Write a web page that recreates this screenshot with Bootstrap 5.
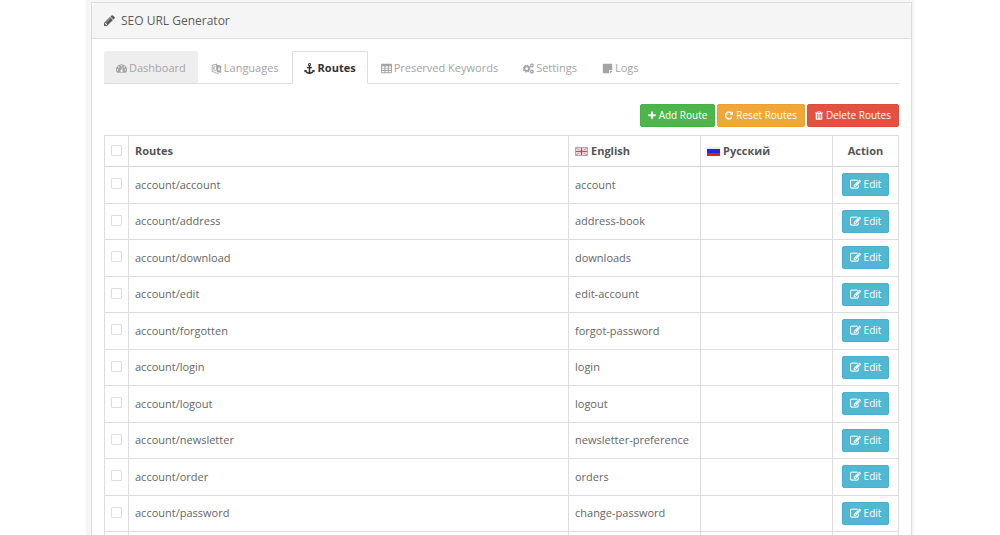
<!DOCTYPE html>
<html lang="en">
<head>
<meta charset="utf-8">
<meta name="viewport" content="width=device-width, initial-scale=1">
<title>SEO URL Generator</title>
<link href="https://cdn.jsdelivr.net/npm/bootstrap@5.3.0/dist/css/bootstrap.min.css" rel="stylesheet">
<style>
  body { font-family: "Open Sans", "Noto Sans", sans-serif; font-size: 11px; line-height: 16px; color: #666; background: #fff; }
  .page-strip { max-width: 828px; padding: 2px 2px 0 5px; background: #f6f6f6; }
  .panel { --bs-card-border-color: #dcdcdc; --bs-card-border-radius: 0; border-bottom: 0; color: #666; }
  .panel-head { padding: 8px 12px; background: #f5f5f5; border-bottom: 1px solid #dcdcdc; border-radius: 0; }
  .panel-head h1 { gap: 6px; font-size: 12px; line-height: 19px; font-weight: 400; color: #5c5c5c; }
  .panel-main { padding: 12px 12px 0; }
  .ico { width: 11px; height: 11px; fill: currentColor; flex: none; }
  .route-tabs { --bs-nav-tabs-border-color: #ddd; --bs-nav-tabs-border-radius: 2px; --bs-nav-tabs-link-active-border-color: #ddd #ddd #fff; --bs-nav-tabs-link-active-color: #333; --bs-nav-link-color: #a4a4a4; --bs-nav-link-hover-color: #888; flex-wrap: wrap; margin-bottom: 20px; }
  .route-tabs .nav-link { display: flex; align-items: center; gap: 2px; padding: 8px 11px 7px; margin-right: 1px; }
  .route-tabs .nav-link.hovered { background: #eee; border-color: #eee #eee #ddd; }
  .route-tabs .nav-link.active { gap: 3px; font-weight: 700; }
  .btn-route { --bs-btn-font-size: 10px; --bs-btn-line-height: 15px; --bs-btn-padding-x: 7px; --bs-btn-padding-y: 3px; --bs-btn-border-radius: 2px; --bs-btn-color: #fff; --bs-btn-hover-color: #fff; display: inline-flex; align-items: center; gap: 3px; }
  .toolbar .ico { width: 8px; height: 9px; }
  .btn-add { --bs-btn-bg: #4cb64c; --bs-btn-border-color: #46b046; --bs-btn-hover-bg: #409c40; }
  .btn-reset { --bs-btn-bg: #f0a638; --bs-btn-border-color: #eba032; --bs-btn-hover-bg: #dc9222; }
  .btn-delete { --bs-btn-bg: #e35141; --bs-btn-border-color: #de4b3b; --bs-btn-hover-bg: #cc3a2a; }
  .btn-edit { --bs-btn-bg: #52b7d3; --bs-btn-border-color: #49b0cd; --bs-btn-hover-bg: #3a9fbc; }
  .toolbar { gap: 2px; margin-bottom: 8px; }
  .routes { --bs-table-color: #666; --bs-table-bg: #fff; border-color: #ddd; table-layout: fixed; margin: 0; }
  .routes th, .routes td { padding: 0 6px; vertical-align: middle; }
  .routes td { padding-bottom: 1px; }
  .routes th { color: #555; font-weight: 700; }
  .routes thead tr { height: 31px; }
  .routes thead th { border-bottom: 1px solid #d2d2d2; }
  .routes tbody tr:nth-child(odd) { height: 37px; }
  .routes tbody tr:nth-child(even) { height: 36px; }
  .col-tick { width: 24px; }
  .col-lang { width: 132px; }
  .col-act { width: 66px; }
  .routes .form-check-input { width: 11px; height: 11px; margin: 0 0 2px; border: 1px solid #ddd; border-radius: 1px; display: block; }
  .flag { width: 13px; height: 9px; }
  .lang-name { gap: 3px; }
</style>
</head>
<body>
<svg class="d-none" aria-hidden="true">
  <symbol id="i-pencil" viewBox="128 128 1536 1536"><path d="M491 1536l91-91-235-235-91 91v107h128v128h107zm523-928q0-22-22-22-10 0-17 7l-542 542q-7 7-7 17 0 22 22 22 10 0 17-7l542-542q7-7 7-17zm-54-192l416 416-832 832h-416v-416zm683 96q0 53-37 90l-166 166-416-416 166-165q36-38 90-38 53 0 91 38l235 234q37 39 37 91z"/></symbol>
  <symbol id="i-dash" viewBox="0 0 14 14"><path fill-rule="evenodd" d="M7 1.500a7 7 0 0 1 5.900 10.700q-.2.300-.5.300H1.600q-.3 0-.5-.300A7 7 0 0 1 7 1.500zM2 7.500a1 1 0 1 0 0 2 1 1 0 0 0 0-2zM3.500 4a1 1 0 1 0 0 2 1 1 0 0 0 0-2zM7 2.500a1 1 0 1 0 0 2 1 1 0 0 0 0-2zM10.500 4a1 1 0 1 0 0 2 1 1 0 0 0 0-2zM12 7.500a1 1 0 1 0 0 2 1 1 0 0 0 0-2zM7.700 5.600l-.8 3a1.500 1.500 0 1 0 1 .3l.8-3z"/></symbol>
  <symbol id="i-lang" viewBox="0 0 14 14"><path fill-rule="evenodd" d="M1 2.500L7.500.500v9L1 11.500zM2 3.600v6.600l4.500-1.400V2.200z"/><path d="M2.800 4.700l2.900-.8v.8l-.8.300q-.2 1.300-.9 2.200l1.300.7-.4.700-1.500-.8-.9.700-.3-.7.600-.5-.5-.7.700-.2.300.4q.4-.5.500-1.200l-1 .3z"/><path fill-rule="evenodd" d="M7.500 2L13 3.800v9L7.500 11zM9.800 5L8.500 9.300l.8.300.3-1 1.400.5.300 1.100.8.300L10.700 5.300zm.4 1.500l.5 1.700-.9-.3z"/><path d="M3 12l1-.4q2 1.200 4.500.8v-.7l2 1.200-2 1v-.7Q5 13.600 3 12z"/></symbol>
  <symbol id="i-anchor" viewBox="0 0 14 14"><path fill-rule="evenodd" d="M7 0a2 2 0 0 1 1 3.700V5h2.200v1.800H8v4.900q2-.3 3-1.500l-.9-.9L13.500 8.500v3.600l-1-.9Q10.500 14 7 14T1.500 11.200l-1 .9V8.500l3.400.8-.9.900q1 1.200 3 1.500V6.800H3.800V5H6V3.700A2 2 0 0 1 7 0zm0 1.300a.7.700 0 1 0 0 1.400.7.700 0 0 0 0-1.400z"/></symbol>
  <symbol id="i-table" viewBox="0 0 14 14"><path fill-rule="evenodd" d="M1.200 1h11.600q1.200 0 1.200 1.200v9.600q0 1.200-1.200 1.200H1.200Q0 13 0 11.800V2.200Q0 1 1.200 1zM1.300 4v1.900h3V4zm4.300 0v1.900h3V4zm4.300 0v1.900h2.900V4zM1.300 7.100V9h3V7.100zm4.300 0V9h3V7.100zm4.300 0V9h2.900V7.100zM1.300 10.200v1.600h3v-1.600zm4.300 0v1.600h3v-1.600zm4.300 0v1.600h2.900v-1.600z"/></symbol>
  <symbol id="i-cogs" viewBox="0 0 14 14"><g fill="none" stroke="currentColor"><circle cx="4.700" cy="7.200" r="2.900" stroke-width="2.200"/><circle cx="4.700" cy="7.200" r="4.200" stroke-width="1.500" stroke-dasharray="1.800 1.500"/><circle cx="11.300" cy="3.200" r="1.600" stroke-width="1.500"/><circle cx="11.300" cy="3.200" r="2.400" stroke-width=".9" stroke-dasharray="1.200"/><circle cx="11.300" cy="11" r="1.600" stroke-width="1.500"/><circle cx="11.300" cy="11" r="2.400" stroke-width=".9" stroke-dasharray="1.200"/></g></symbol>
  <symbol id="i-note" viewBox="0 0 14 14"><path d="M1.500 1h11q.5 0 .5.500V9H9.700Q9 9 9 9.700V13H1.500q-.5 0-.5-.5v-11Q1 1 1.500 1zM10 10h3q0 .8-.5 1.300l-1.200 1.200Q10.800 13 10 13z"/></symbol>
  <symbol id="i-plus" viewBox="128 128 1536 1536"><path d="M1600 736v192q0 40-28 68t-68 28h-416v416q0 40-28 68t-68 28h-192q-40 0-68-28t-28-68v-416h-416q-40 0-68-28t-28-68v-192q0-40 28-68t68-28h416v-416q0-40 28-68t68-28h192q40 0 68 28t28 68v416h416q40 0 68 28t28 68z"/></symbol>
  <symbol id="i-repeat" viewBox="128 128 1536 1536"><path stroke="currentColor" stroke-width="60" d="M1664 256v448q0 26-19 45t-45 19h-448q-42 0-59-40-17-39 14-69l138-138q-148-137-349-137-104 0-198.500 40.500t-163.500 109.500-109.500 163.500-40.500 198.500 40.500 198.500 109.500 163.500 163.500 109.500 198.500 40.500q119 0 225-52t179-147q7-10 23-12 15 0 25 9l137 138q9 8 9.500 20.500t-7.500 22.500q-109 132-264 204.500t-327 72.500q-156 0-298-61t-245-164-164-245-61-298 61-298 164-245 245-164 298-61q147 0 284.500 55.500t244.500 156.500l130-129q29-31 70-14 39 17 39 59z"/></symbol>
  <symbol id="i-trash" viewBox="192 128 1408 1536"><path d="M704 1376v-704q0-14-9-23t-23-9h-64q-14 0-23 9t-9 23v704q0 14 9 23t23 9h64q14 0 23-9t9-23zm256 0v-704q0-14-9-23t-23-9h-64q-14 0-23 9t-9 23v704q0 14 9 23t23 9h64q14 0 23-9t9-23zm256 0v-704q0-14-9-23t-23-9h-64q-14 0-23 9t-9 23v704q0 14 9 23t23 9h64q14 0 23-9t9-23zm-544-992h448l-48-117q-7-9-17-11h-317q-10 2-17 11zm928 32v64q0 14-9 23t-23 9h-96v948q0 83-47 143.500t-113 60.500h-832q-66 0-113-58.500t-47-141.500v-952h-96q-14 0-23-9t-9-23v-64q0-14 9-23t23-9h309l70-167q15-37 54-63t79-26h320q40 0 79 26t54 63l70 167h309q14 0 23 9t9 23z"/></symbol>
  <symbol id="i-edit" viewBox="0 64 1792 1664"><path stroke="currentColor" stroke-width="50" d="M888 1184l116-116-152-152-116 116v56h96v96h56zm440-720q-16-16-33 1l-350 350q-17 17-1 33t33-1l350-350q17-17 1-33zm80 594v190q0 119-84.500 203.500t-203.500 84.500h-832q-119 0-203.500-84.500t-84.500-203.500v-832q0-119 84.500-203.500t203.500-84.500h832q63 0 117 25 15 7 18 23 3 17-9 29l-49 49q-14 14-32 8-23-6-45-6h-832q-66 0-113 47t-47 113v832q0 66 47 113t113 47h832q66 0 113-47t47-113v-126q0-13 9-22l64-64q15-15 35-7t20 29zm-96-738l288 288-672 672h-288v-288zm444 132l-92 92-288-288 92-92q28-28 68-28t68 28l152 152q28 28 28 68t-28 68z"/></symbol>
</svg>

<div class="page-strip mx-auto">
  <main class="card panel">
    <div class="card-header panel-head">
      <h1 class="d-flex align-items-center mb-0"><svg class="ico"><use href="#i-pencil"/></svg>SEO URL Generator</h1>
    </div>
    <div class="panel-main">
      <ul class="nav nav-tabs route-tabs">
        <li class="nav-item"><a class="nav-link hovered" href="#dashboard"><svg class="ico"><use href="#i-dash"/></svg>Dashboard</a></li>
        <li class="nav-item"><a class="nav-link" href="#languages"><svg class="ico"><use href="#i-lang"/></svg>Languages</a></li>
        <li class="nav-item"><a class="nav-link active" aria-current="page" href="#routes"><svg class="ico"><use href="#i-anchor"/></svg>Routes</a></li>
        <li class="nav-item"><a class="nav-link" href="#keywords"><svg class="ico"><use href="#i-table"/></svg>Preserved Keywords</a></li>
        <li class="nav-item"><a class="nav-link" href="#settings"><svg class="ico"><use href="#i-cogs"/></svg>Settings</a></li>
        <li class="nav-item"><a class="nav-link" href="#logs"><svg class="ico"><use href="#i-note"/></svg>Logs</a></li>
      </ul>
      <div class="toolbar d-flex justify-content-end">
        <button type="button" class="btn btn-route btn-add"><svg class="ico"><use href="#i-plus"/></svg>Add Route</button>
        <button type="button" class="btn btn-route btn-reset"><svg class="ico"><use href="#i-repeat"/></svg>Reset Routes</button>
        <button type="button" class="btn btn-route btn-delete"><svg class="ico"><use href="#i-trash"/></svg>Delete Routes</button>
      </div>
      <table class="table table-bordered routes" id="routes">
        <colgroup><col class="col-tick"><col><col class="col-lang"><col class="col-lang"><col class="col-act"></colgroup>
        <thead>
          <tr>
            <th><input class="form-check-input" type="checkbox" aria-label="Select all routes"></th>
            <th scope="col">Routes</th>
            <th scope="col"><span class="lang-name d-flex align-items-center"><svg class="flag" viewBox="0 0 13 9"><path fill="#f4dfe4" stroke="#b9a0ac" d="M.5.5h12v8H.5z"/><path stroke="#8b8fb8" stroke-width=".8" d="M1 1l11 7M12 1L1 8"/><path stroke="#fff" stroke-width="3" d="M6.500 1v7M1 4.500h11"/><path stroke="#d8404a" stroke-width="1.500" d="M6.500 1v7M1 4.500h11"/></svg>English</span></th>
            <th scope="col"><span class="lang-name d-flex align-items-center"><svg class="flag" viewBox="0 0 13 9"><path fill="#e8e8ee" d="M0 0h13v3H0z"/><path fill="#2a23d0" d="M0 2h13v4H0z"/><path fill="#e01d2c" d="M0 6h13v3H0z"/></svg>Русский</span></th>
            <th scope="col" class="text-center">Action</th>
          </tr>
        </thead>
        <tbody id="route-rows"></tbody>
      </table>
    </div>
  </main>
</div>
<script src="https://cdn.jsdelivr.net/npm/bootstrap@5.3.0/dist/js/bootstrap.bundle.min.js"></script>
<script>
  const routes = [
    ["account/account", "account"],
    ["account/address", "address-book"],
    ["account/download", "downloads"],
    ["account/edit", "edit-account"],
    ["account/forgotten", "forgot-password"],
    ["account/login", "login"],
    ["account/logout", "logout"],
    ["account/newsletter", "newsletter-preference"],
    ["account/order", "orders"],
    ["account/password", "change-password"]
  ];
  // One table row per route, then an empty closing row.
  document.getElementById("route-rows").innerHTML = routes.map(([route, keyword]) => `
    <tr>
      <td><input class="form-check-input" type="checkbox" aria-label="Select ${route}"></td>
      <td>${route}</td>
      <td>${keyword}</td>
      <td></td>
      <td class="text-center"><button type="button" class="btn btn-route btn-edit"><svg class="ico"><use href="#i-edit"/></svg>Edit</button></td>
    </tr>`).join("") + "<tr><td></td><td></td><td></td><td></td><td></td></tr>";
</script>
</body>
</html>
